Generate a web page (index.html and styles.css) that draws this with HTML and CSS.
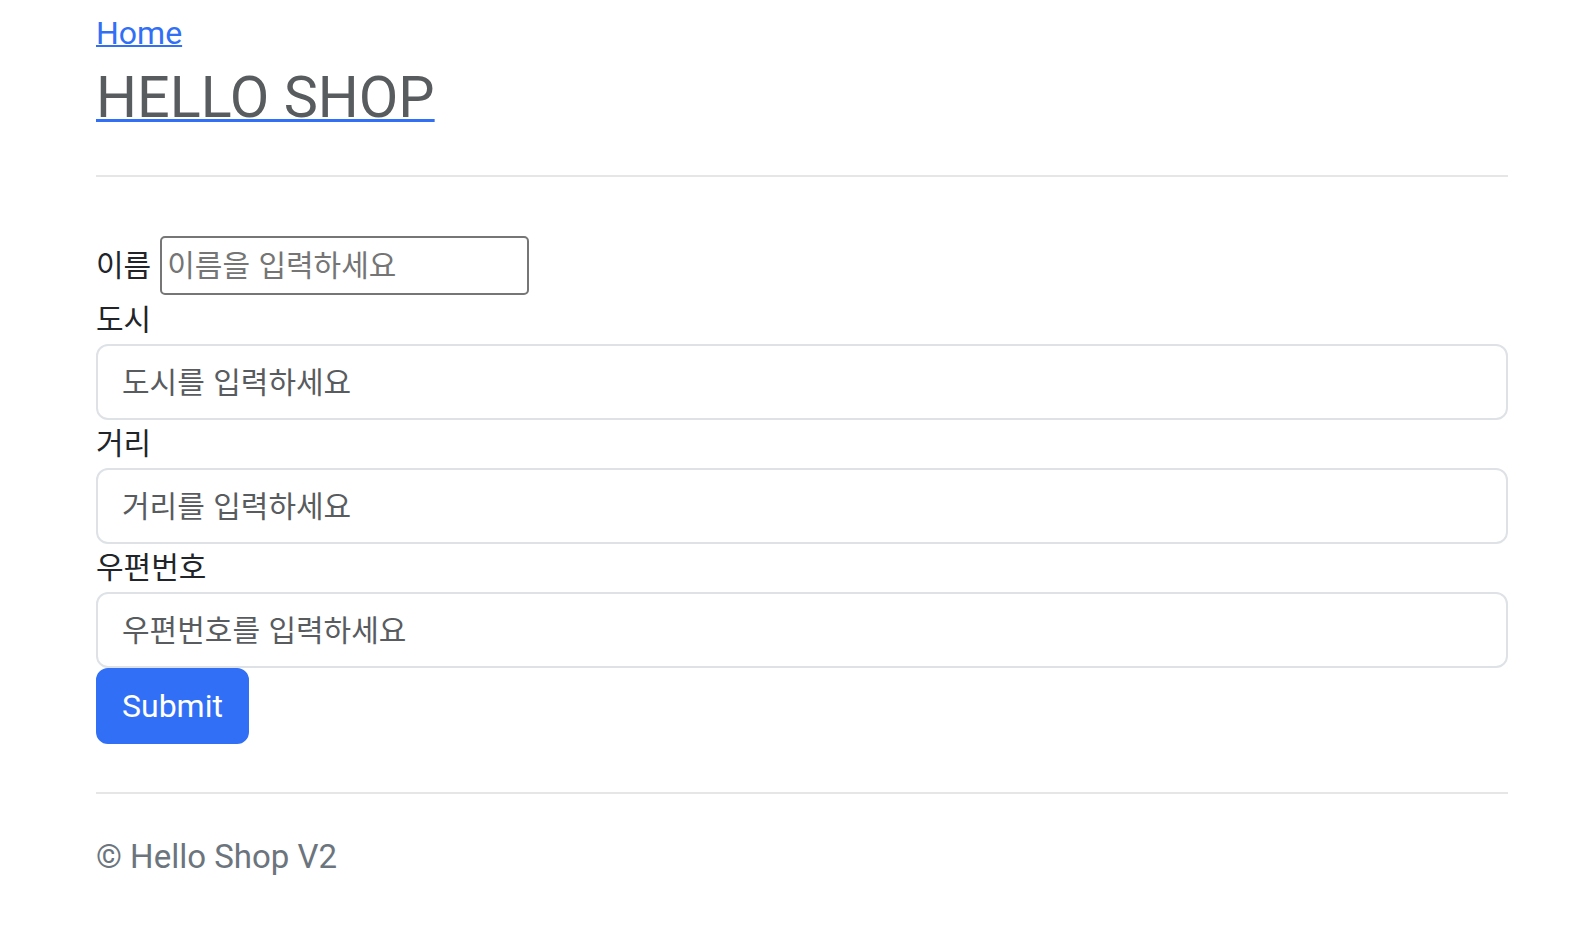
FILE: index.html
```html
<!DOCTYPE html>
<html lang="ko">
<head>
<meta charset="utf-8">
<title>HELLO SHOP</title>
<link rel="stylesheet" href="styles.css">
</head>
<body>
<div class="container">
  <header class="header">
    <a class="home-link" href="#">Home</a>
    <a class="brand-link" href="#"><h2 class="brand">HELLO SHOP</h2></a>
  </header>
  <hr class="divider divider-top">
  <form class="form">
    <div class="name-row">
      <label class="label" for="name">이름</label>
      <input class="plain-input" id="name" type="text" placeholder="이름을 입력하세요">
    </div>
    <label class="label" for="city">도시</label>
    <input class="form-control" id="city" type="text" placeholder="도시를 입력하세요">
    <label class="label" for="street">거리</label>
    <input class="form-control" id="street" type="text" placeholder="거리를 입력하세요">
    <label class="label" for="zip">우편번호</label>
    <input class="form-control" id="zip" type="text" placeholder="우편번호를 입력하세요">
    <div class="actions">
      <button class="btn-primary" type="submit">Submit</button>
    </div>
  </form>
  <hr class="divider divider-bottom">
  <footer class="footer">© Hello Shop V2</footer>
</div>
</body>
</html>
```
FILE: styles.css
```css
html, body {
  margin: 0;
  padding: 0;
  background: #ffffff;
}

body {
  font-family: "Roboto", "Noto Sans CJK KR", sans-serif;
  color: #212529;
}

.container {
  margin-left: 96px;
  width: 1412px;
}

.header {
  padding-top: 9px;
  display: flex;
  flex-direction: column;
  align-items: flex-start;
}

.home-link {
  font-size: 32px;
  line-height: 48px;
  color: #316ff6;
  text-decoration: underline;
  text-decoration-thickness: 2px;
}

.brand-link {
  margin-top: 7px;
  color: #316ff6;
  text-decoration: underline;
  text-decoration-thickness: 3px;
}

.brand {
  margin: 0;
  font-size: 57.5px;
  line-height: 67px;
  font-weight: 400;
  color: #595c5f;
}

.divider {
  border: 0;
  border-top: 2px solid #e6e6e6;
  margin: 0;
  height: 0;
}

.divider-top {
  margin-top: 44px;
}

.form {
  margin-top: 59px;
  display: flex;
  flex-direction: column;
  align-items: stretch;
}

.name-row {
  display: flex;
  align-items: center;
  gap: 9px;
  height: 59px;
}

.label {
  font-family: "Noto Sans CJK KR", sans-serif;
  font-size: 30px;
  line-height: 42px;
  padding-bottom: 6px;
  color: #212529;
  display: block;
}

.name-row .label {
  line-height: 40px;
  padding-bottom: 6px;
}

.plain-input {
  box-sizing: border-box;
  width: 369px;
  height: 59px;
  border: 2px solid #767676;
  border-radius: 5px;
  padding: 0 5px 6px;
  font-family: "Noto Sans CJK KR", sans-serif;
  font-size: 30px;
  color: #212529;
  background: #ffffff;
  outline: none;
}

.plain-input::placeholder {
  color: #757575;
}

.form-control {
  box-sizing: border-box;
  width: 100%;
  height: 76px;
  border: 2px solid #dee2e6;
  border-radius: 12px;
  padding: 0 24px 4px;
  font-family: "Noto Sans CJK KR", sans-serif;
  font-size: 30px;
  color: #212529;
  background: #ffffff;
  outline: none;
}

.form-control::placeholder {
  color: #595c5f;
}

.name-row + .label {
  margin-top: 1px;
}

.actions {
  display: flex;
}

.btn-primary {
  box-sizing: border-box;
  height: 76px;
  padding: 0 24px;
  border: 2px solid #316ff6;
  border-radius: 12px;
  background: #316ff6;
  color: #ffffff;
  font-family: "Roboto", sans-serif;
  font-size: 32px;
  line-height: 48px;
  cursor: pointer;
}

.divider-bottom {
  margin-top: 48px;
}

.footer {
  margin-top: 38px;
  font-size: 33px;
  line-height: 50px;
  color: #6c757d;
  padding-bottom: 40px;
}
```
